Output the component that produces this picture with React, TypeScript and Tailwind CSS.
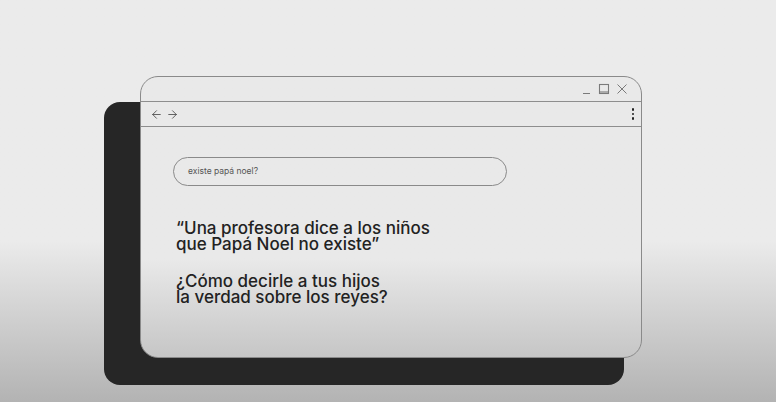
import { ArrowLeft, ArrowRight } from 'lucide-react';

function WindowControls() {
  return (
    <div className="flex items-center gap-[6px] pr-[13px] text-[#7a7a7a]">
      <svg width="10" height="12" viewBox="0 0 10 12" fill="none" stroke="currentColor" strokeWidth="1">
        <line x1="1" y1="10.5" x2="8" y2="10.5" />
      </svg>
      <svg width="12" height="12" viewBox="0 0 12 12" fill="none" stroke="currentColor" strokeWidth="1.1">
        <rect x="1.5" y="1.5" width="9" height="9" />
        <line x1="1.5" y1="9" x2="10.5" y2="9" />
      </svg>
      <svg width="12" height="12" viewBox="0 0 12 12" fill="none" stroke="currentColor" strokeWidth="1">
        <line x1="1.5" y1="1.5" x2="10.5" y2="10.5" />
        <line x1="10.5" y1="1.5" x2="1.5" y2="10.5" />
      </svg>
    </div>
  );
}

export default function App() {
  return (
    <div
      className="relative w-[776px] h-[402px] overflow-hidden bg-linear-to-b from-[#ebebeb] from-60% to-[#b3b3b3] pt-[76px] pl-[140px]"
      style={{ fontFamily: 'Inter, "Noto Sans", sans-serif' }}
    >
      {/* dark backing card */}
      <div className="absolute left-[104px] top-[102px] w-[520px] h-[283px] rounded-[16px] bg-[#262626]" />

      <div className="relative w-[502px] h-[282px] rounded-[18px] border border-[#8a8a8a] bg-linear-to-b from-[#e9e9e9] from-65% to-[#c6c6c6] flex flex-col">
        <div className="h-[25px] border-b border-[#8e8e8e] flex items-center justify-end">
          <WindowControls />
        </div>
        <div className="h-[25px] border-b border-[#8e8e8e] flex items-center justify-between pl-[9px] pr-[7px] text-[#444]">
          <div className="flex items-center gap-[3px]">
            <ArrowLeft size={13} strokeWidth={1.5} />
            <ArrowRight size={13} strokeWidth={1.5} />
          </div>
          <div className="flex flex-col gap-[2px]">
            <span className="w-[2.5px] h-[2.5px] rounded-full bg-[#222]" />
            <span className="w-[2.5px] h-[2.5px] rounded-full bg-[#222]" />
            <span className="w-[2.5px] h-[2.5px] rounded-full bg-[#222]" />
          </div>
        </div>

        <div className="pl-[32px] pt-[30px]">
          <div className="w-[334px] h-[29px] rounded-full border border-[#8a8a8a] flex items-center pl-[14px] text-[8.5px] text-[#555]">
            existe papá noel?
          </div>

          <div className="mt-[34px] pl-[3px] text-[17px] leading-[16px] font-medium text-[#222]">
            <p>
              “Una profesora dice a los niños
              <br />
              que Papá Noel no existe”
            </p>
            <p className="mt-[21px]">
              ¿Cómo decirle a tus hijos
              <br />
              la verdad sobre los reyes?
            </p>
          </div>
        </div>
      </div>
    </div>
  );
}
